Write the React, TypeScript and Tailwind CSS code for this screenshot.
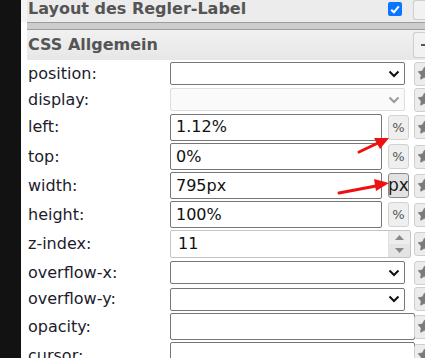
import { Star } from 'lucide-react';

type Kind = 'select' | 'disabled' | 'unit' | 'number' | 'text';

type Row = {
  label: string;
  kind: Kind;
  h: string;
  value?: string;
  unit?: string;
  pressed?: boolean;
};

const rows: Row[] = [
  { label: 'position:', kind: 'select', h: 'h-[27px]' },
  { label: 'display:', kind: 'disabled', h: 'h-[25px]' },
  { label: 'left:', kind: 'unit', h: 'h-[30px]', value: '1.12%', unit: '%' },
  { label: 'top:', kind: 'unit', h: 'h-[29px]', value: '0%', unit: '%' },
  { label: 'width:', kind: 'unit', h: 'h-[29px]', value: '795px', unit: 'px', pressed: true },
  { label: 'height:', kind: 'unit', h: 'h-[29px]', value: '100%', unit: '%' },
  { label: 'z-index:', kind: 'number', h: 'h-[30px]', value: '11' },
  { label: 'overflow-x:', kind: 'select', h: 'h-[27px]' },
  { label: 'overflow-y:', kind: 'select', h: 'h-[26px]' },
  { label: 'opacity:', kind: 'text', h: 'h-[29px]' },
  { label: 'cursor:', kind: 'text', h: 'h-[29px]' },
];

function Chevron({ muted = false }: { muted?: boolean }) {
  return (
    <svg width="12" height="8" viewBox="0 0 12 8" className="mr-[4px]">
      <polyline
        points="1.5,1.5 6,6 10.5,1.5"
        fill="none"
        stroke={muted ? '#9a9a9a' : '#111'}
        strokeWidth="2"
      />
    </svg>
  );
}

function StarButton() {
  return (
    <div className="flex h-[24px] w-[22px] shrink-0 items-center rounded-[3px] border border-[#cfcfcf] bg-[#ececec] pl-[2px]">
      <Star className="h-[15px] w-[15px] text-[#7a7a7a]" fill="#7a7a7a" strokeWidth={1} />
    </div>
  );
}

function Control({ row }: { row: Row }) {
  if (row.kind === 'select' || row.kind === 'disabled') {
    const off = row.kind === 'disabled';
    return (
      <div
        className={`flex h-[23px] w-[235px] items-center justify-end rounded-[2px] border ${
          off ? 'border-[#dedede] bg-[#fafafa]' : 'border-[#767676] bg-white'
        }`}
      >
        <Chevron muted={off} />
      </div>
    );
  }
  if (row.kind === 'unit') {
    return (
      <div className="flex items-center">
        <div className="flex h-[27px] w-[212px] items-center rounded-[2px] border border-[#767676] bg-white pl-[5px] text-[16px] text-[#111]">
          {row.value}
        </div>
        {row.pressed ? (
          <div className="ml-[6px] flex h-[25px] w-[21px] items-center justify-center rounded-[3px] border border-[#8a8a8a] bg-[#e2e2e2] text-[17px] leading-none text-[#1a1a1a]">
            {row.unit}
          </div>
        ) : (
          <div className="ml-[6px] flex h-[25px] w-[21px] items-center justify-center rounded-[3px] border border-[#d2d2d2] bg-[#efefef] text-[13px] leading-none text-[#555]">
            {row.unit}
          </div>
        )}
      </div>
    );
  }
  if (row.kind === 'number') {
    return (
      <div className="flex h-[28px] w-[241px] items-center rounded-[2px] border border-[#c4c4c4] bg-white pl-[7px] text-[16px] text-[#111]">
        <span className="flex-1">{row.value}</span>
        <div className="flex h-full w-[22px] flex-col border-l border-[#e0e0e0]">
          <div className="flex flex-1 items-center justify-center bg-[#ededed]">
            <svg width="9" height="5" viewBox="0 0 9 5">
              <polygon points="0,5 4.5,0 9,5" fill="#8a8a8a" />
            </svg>
          </div>
          <div className="flex flex-1 items-center justify-center bg-[#e4e4e4]">
            <svg width="9" height="5" viewBox="0 0 9 5">
              <polygon points="0,0 4.5,5 9,0" fill="#8a8a8a" />
            </svg>
          </div>
        </div>
      </div>
    );
  }
  return <div className="h-[27px] w-[245px] rounded-[2px] border border-[#767676] bg-white" />;
}

export default function App() {
  return (
    <div className="relative flex h-[358px] w-[425px] overflow-hidden bg-white font-['DejaVu_Sans',Verdana,sans-serif]">
      <div className="w-[21px] shrink-0 bg-[#121212]" />
      <div className="flex min-w-0 flex-1 flex-col">
        <div className="flex h-[22px] shrink-0 items-center bg-[#f4f4f4] pl-[6px]">
          <div className="flex h-full flex-1 items-start bg-[#ececec] pl-[1px]">
            <span className="-mt-[1px] text-[16px] font-bold leading-[20px] text-[#555]">
              Layout des Regler-Label
            </span>
            <div className="ml-auto mr-[11px] mt-[2px] flex h-[14px] w-[14px] items-center justify-center rounded-[2px] bg-[#0a75ff]">
              <svg width="10" height="9" viewBox="0 0 10 9">
                <polyline points="1.2,4.8 3.9,7.3 8.8,1.4" fill="none" stroke="#fff" strokeWidth="2.1" />
              </svg>
            </div>
            <div className="h-[20px] w-[12px] rounded-l-[3px] border border-r-0 border-[#cfcfcf] bg-[#f2f2f2]" />
          </div>
        </div>
        <div className="ml-[6px] h-[8px] shrink-0 border-y border-[#9d9d9d] bg-[#cdcdcd]" />
        <div className="ml-[6px] flex h-[30px] shrink-0 items-center bg-gradient-to-b from-[#f1f1f1] to-[#e7e7e7] pl-[1px]">
          <span className="text-[16px] font-bold text-[#555]">CSS Allgemein</span>
          <div className="ml-auto flex h-[26px] w-[12px] items-start justify-end rounded-l-[3px] border border-r-0 border-[#cfcfcf] bg-[#f2f2f2] pt-[11px]">
            <div className="h-[2px] w-[4px] bg-[#555]" />
          </div>
        </div>
        {rows.map((row) => (
          <div key={row.label} className={`flex shrink-0 items-center ${row.h}`}>
            <div className="w-[149px] shrink-0 pl-[7px] text-[16px] text-[#1c1c2c]">{row.label}</div>
            <div className="w-[244px] shrink-0">
              <Control row={row} />
            </div>
            <StarButton />
          </div>
        ))}
      </div>
      <svg className="pointer-events-none absolute left-0 top-0" width="425" height="358" viewBox="0 0 425 358">
        <line x1="359" y1="152" x2="378" y2="143" stroke="#ee1111" strokeWidth="3" strokeLinecap="round" />
        <polygon points="389,138 374,138 380,149" fill="#ee1111" />
        <line x1="339" y1="193" x2="376" y2="186" stroke="#ee1111" strokeWidth="3" strokeLinecap="round" />
        <polygon points="389,183 374,179 376,191" fill="#ee1111" />
      </svg>
    </div>
  );
}
